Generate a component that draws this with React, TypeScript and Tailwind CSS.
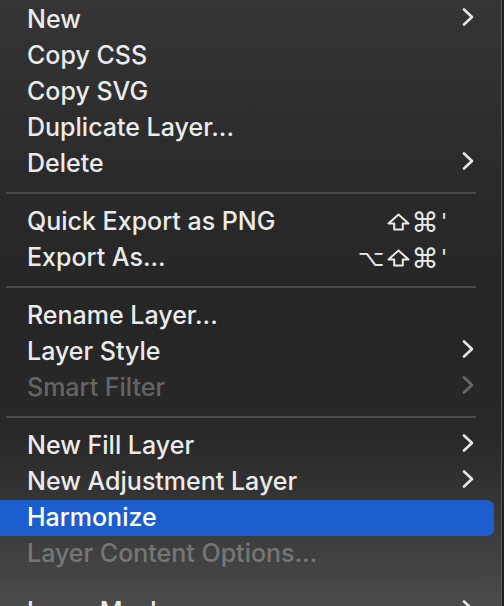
import React from "react";

type Item =
  | { kind: "sep" }
  | {
      kind: "item";
      label: string;
      shortcut?: string[];
      sub?: boolean;
      disabled?: boolean;
      active?: boolean;
    };

const items: Item[] = [
  { kind: "item", label: "New", sub: true },
  { kind: "item", label: "Copy CSS" },
  { kind: "item", label: "Copy SVG" },
  { kind: "item", label: "Duplicate Layer..." },
  { kind: "item", label: "Delete", sub: true },
  { kind: "sep" },
  { kind: "item", label: "Quick Export as PNG", shortcut: ["shift", "cmd", "'"] },
  { kind: "item", label: "Export As...", shortcut: ["opt", "shift", "cmd", "'"] },
  { kind: "sep" },
  { kind: "item", label: "Rename Layer..." },
  { kind: "item", label: "Layer Style", sub: true },
  { kind: "item", label: "Smart Filter", sub: true, disabled: true },
  { kind: "sep" },
  { kind: "item", label: "New Fill Layer", sub: true },
  { kind: "item", label: "New Adjustment Layer", sub: true },
  { kind: "item", label: "Harmonize", active: true },
  { kind: "item", label: "Layer Content Options...", disabled: true },
  { kind: "sep" },
  { kind: "item", label: "Layer Mask", sub: true },
];

function Chevron({ dim }: { dim?: boolean }) {
  return (
    <svg
      width="12"
      height="20"
      viewBox="0 0 12 20"
      fill="none"
      className={dim ? "text-white/30" : "text-[#e6e6e6]"}
    >
      <path
        d="M2 2.5 L10 10 L2 17.5"
        stroke="currentColor"
        strokeWidth="2.6"
        strokeLinecap="round"
        strokeLinejoin="round"
      />
    </svg>
  );
}

function ShiftKey() {
  return (
    <svg width="23" height="18" viewBox="0 0 23 18" fill="none">
      <path
        d="M11.5 1.5 L21.5 10.5 H15.8 V16.5 H7.2 V10.5 H1.5 Z"
        stroke="#e8e8e8"
        strokeWidth="2"
        strokeLinejoin="round"
      />
    </svg>
  );
}

function Key({ k }: { k: string }) {
  if (k === "shift")
    return (
      <span className="flex w-[26px] justify-center">
        <ShiftKey />
      </span>
    );
  if (k === "cmd")
    return <span className="w-[28px] text-center text-[27px] leading-none">⌘</span>;
  if (k === "opt")
    return <span className="w-[28px] text-center text-[23px] leading-none">⌥</span>;
  return <span className="w-[10px] text-center text-[22px] leading-none">'</span>;
}

export default function App() {
  return (
    <div className="flex h-[606px] w-[504px] overflow-hidden bg-[#1f1f1f]">
      <div
        className="flex w-[501px] flex-col pt-[2px] bg-[linear-gradient(180deg,#353535_0%,#2a2a2a_30%,#262626_50%,#282828_72%,#4b4b4b_100%)]"
        style={{ fontFamily: "Inter, 'Noto Sans', 'Liberation Sans', sans-serif" }}
      >
        {items.map((it, i) => {
          if (it.kind === "sep") {
            return (
              <div key={i} className="flex h-[22px] flex-shrink-0 items-center">
                <div className="ml-[6px] h-[2px] w-[470px] bg-[#4a4a4a]" />
              </div>
            );
          }
          return (
            <div
              key={i}
              className={`flex h-[36px] w-[494px] flex-shrink-0 items-center pl-[27px] text-[25px] font-medium ${
                it.active
                  ? "rounded-r-[7px] bg-[#1c5ecd] text-white"
                  : it.disabled
                  ? "text-white/30"
                  : "text-[#ebebeb]"
              }`}
            >
              <span className="flex-1 whitespace-nowrap">{it.label}</span>
              {it.shortcut && (
                <span
                  className="flex items-center font-normal text-[#e8e8e8]"
                  style={{ fontFamily: "'DejaVu Sans', sans-serif" }}
                >
                  {it.shortcut.map((k, j) => (
                    <Key key={j} k={k} />
                  ))}
                </span>
              )}
              <span className="flex w-[45px] items-center pl-[13px] -translate-y-[3px]">
                {it.sub && <Chevron dim={it.disabled} />}
              </span>
            </div>
          );
        })}
      </div>
      <div className="w-[1px] bg-[#5a5a5a]" />
    </div>
  );
}
